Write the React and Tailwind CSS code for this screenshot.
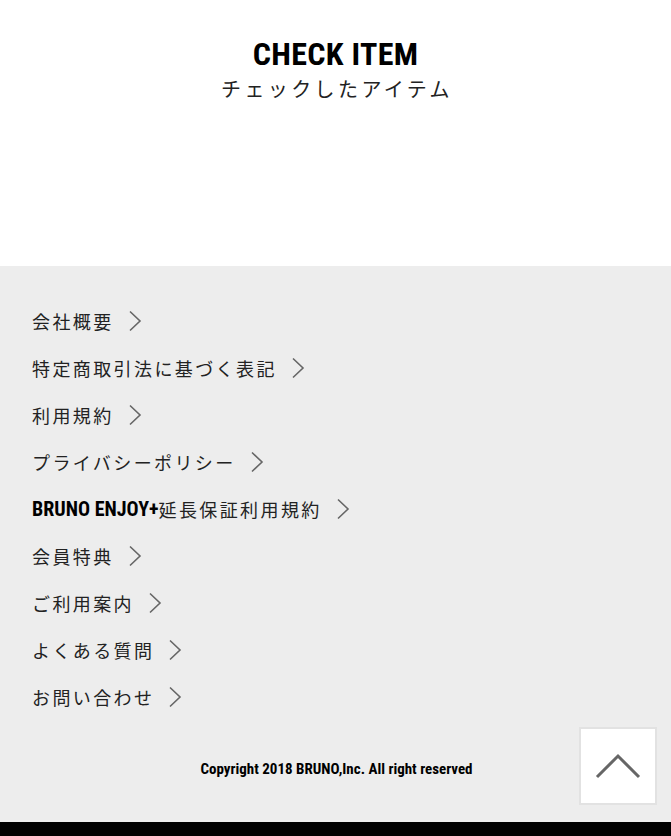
import React from 'react';

const cond = { fontFamily: '"Liberation Sans Narrow", "Roboto Condensed", Roboto, "Liberation Sans", sans-serif' };

const links = [
  { label: '会社概要' },
  { label: '特定商取引法に基づく表記' },
  { label: '利用規約' },
  { label: 'プライバシーポリシー' },
  { label: '延長保証利用規約', prefix: 'BRUNO ENJOY+' },
  { label: '会員特典' },
  { label: 'ご利用案内' },
  { label: 'よくある質問' },
  { label: 'お問い合わせ' },
];

function Chevron() {
  return (
    <svg width="14" height="22" viewBox="0 0 14 22" className="ml-[14px] shrink-0">
      <path d="M2 1.5 L12 11 L2 20.5" fill="none" stroke="#666" strokeWidth="1.6" />
    </svg>
  );
}

export default function App() {
  return (
    <div className="w-[671px] h-[836px] flex flex-col bg-white text-[#222]" style={{ fontFamily: '"Noto Sans CJK JP", "Noto Sans", sans-serif' }}>
      {/* Check item header */}
      <section className="h-[266px] flex flex-col items-center pt-[35px]">
        <h2 className="text-[32px] leading-[38px] font-bold tracking-[0.3px] text-black" style={cond}>CHECK ITEM</h2>
        <p className="mt-[2px] text-[20px] leading-[28px] tracking-[3.4px] pl-[3px]">チェックしたアイテム</p>
      </section>

      {/* Footer */}
      <footer className="flex-1 bg-[#ededed] relative flex flex-col">
        <ul className="pl-[32px] pt-[41px] flex flex-col gap-[19px]">
          {links.map((l, i) => (
            <li key={i} className="flex items-center h-[28px] text-[18px] leading-[28px] tracking-[2.4px]">
              {l.prefix && <span className="font-bold text-[20px] tracking-normal text-black" style={cond}>{l.prefix}</span>}
              <span>{l.label}</span>
              <Chevron />
            </li>
          ))}
        </ul>
        <p className="mt-[47px] text-center pl-[2px] text-[15px] font-bold text-black" style={cond}>Copyright 2018 BRUNO,Inc. All right reserved</p>

        <button className="absolute right-[14px] bottom-[17px] w-[78px] h-[78px] bg-white border-2 border-[#e2e2e2] flex items-center justify-center">
          <svg width="46" height="26" viewBox="0 0 46 26">
            <path d="M2 24 L23 3 L44 24" fill="none" stroke="#666" strokeWidth="3" />
          </svg>
        </button>
      </footer>
      <div className="h-[14px] bg-black" />
    </div>
  );
}
